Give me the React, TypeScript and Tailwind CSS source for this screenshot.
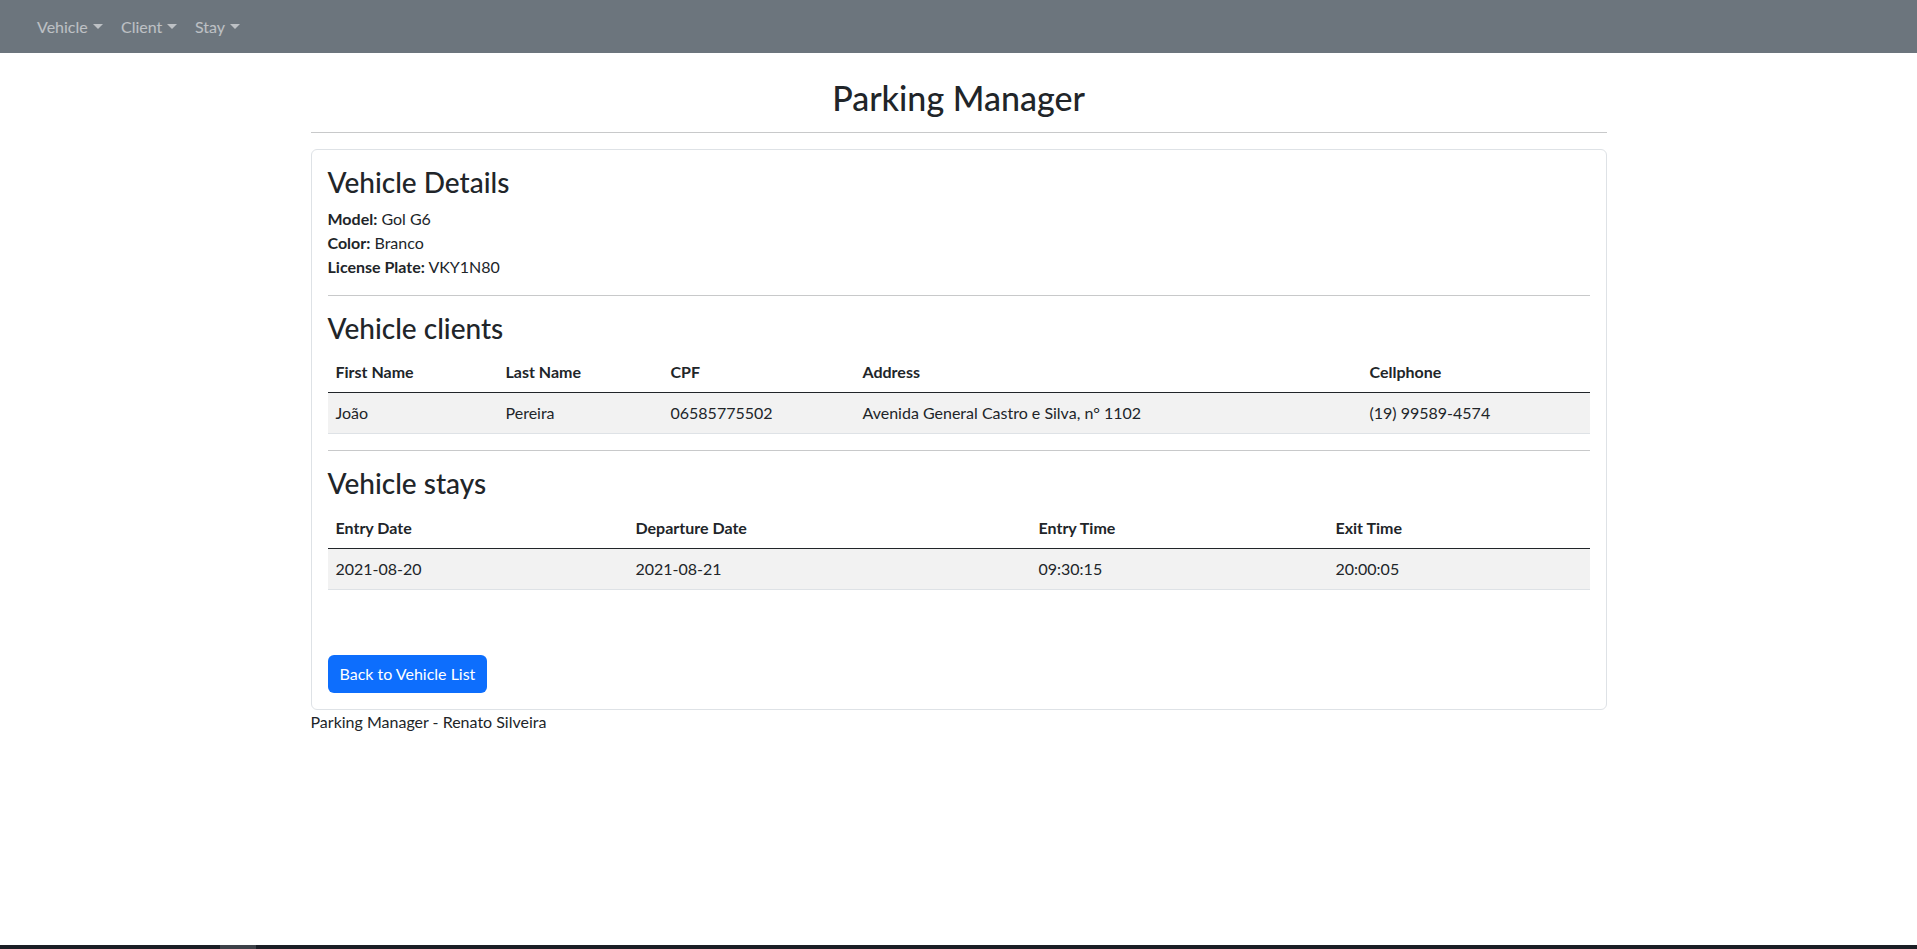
import React from "react";

const Caret = () => (
  <svg width="10" height="5" viewBox="0 0 10 5" className="ml-[5px] inline-block" aria-hidden>
    <polygon points="0,0 10,0 5,5" fill="currentColor" />
  </svg>
);

const Th = ({ children, w }: { children: React.ReactNode; w: string }) => (
  <th className={`${w} px-2 py-2 text-left font-bold leading-6`}>{children}</th>
);

const Td = ({ children }: { children: React.ReactNode }) => (
  <td className="px-2 py-2 leading-6">{children}</td>
);

export default function App() {
  return (
    <div
      className="flex h-[949px] flex-col bg-white text-[#212529] text-base"
      style={{ fontFamily: "Lato, 'Liberation Sans', sans-serif" }}
    >
      <nav className="flex h-[53px] shrink-0 items-center bg-[#6c757d] pl-[37px] text-white/55">
        <span className="flex w-[84px] items-center">
          Vehicle
          <Caret />
        </span>
        <span className="flex w-[74px] items-center">
          Client
          <Caret />
        </span>
        <span className="flex items-center">
          Stay
          <Caret />
        </span>
      </nav>

      <main className="flex-1">
        <div className="mx-auto w-[1296px]">
          <h2 className="mt-[25px] mb-[14px] text-center text-[34px] leading-[40px] font-medium">
            Parking Manager
          </h2>
          <hr className="border-0 border-t border-[#c8c9ca]" />

          <div className="mt-4 rounded-md border border-[#dee2e6] p-4">
            <h3 className="mb-[7px] text-[28px] leading-[33.6px] font-medium">Vehicle Details</h3>
            <div className="leading-6">
              <b>Model:</b> Gol G6
            </div>
            <div className="leading-6">
              <b>Color:</b> Branco
            </div>
            <div className="leading-6">
              <b>License Plate:</b> VKY1N80
            </div>

            <hr className="my-4 border-0 border-t border-[#c8c9ca]" />

            <h3 className="mb-[7px] text-[28px] leading-[33.6px] font-medium">Vehicle clients</h3>
            <table className="mb-4 w-full table-fixed border-collapse">
              <thead>
                <tr className="border-b border-[#212529]">
                  <Th w="w-[170px]">First Name</Th>
                  <Th w="w-[165px]">Last Name</Th>
                  <Th w="w-[192px]">CPF</Th>
                  <Th w="w-[507px]">Address</Th>
                  <Th w="w-auto">Cellphone</Th>
                </tr>
              </thead>
              <tbody>
                <tr className="border-b border-[#dee2e6] bg-[#f2f2f2]">
                  <Td>João</Td>
                  <Td>Pereira</Td>
                  <Td>06585775502</Td>
                  <Td>Avenida General Castro e Silva, n° 1102</Td>
                  <Td>(19) 99589-4574</Td>
                </tr>
              </tbody>
            </table>

            <hr className="my-4 border-0 border-t border-[#c8c9ca]" />

            <h3 className="mb-[7px] text-[28px] leading-[33.6px] font-medium">Vehicle stays</h3>
            <table className="w-full table-fixed border-collapse">
              <thead>
                <tr className="border-b border-[#212529]">
                  <Th w="w-[300px]">Entry Date</Th>
                  <Th w="w-[403px]">Departure Date</Th>
                  <Th w="w-[297px]">Entry Time</Th>
                  <Th w="w-auto">Exit Time</Th>
                </tr>
              </thead>
              <tbody>
                <tr className="border-b border-[#dee2e6] bg-[#f2f2f2]">
                  <Td>2021-08-20</Td>
                  <Td>2021-08-21</Td>
                  <Td>09:30:15</Td>
                  <Td>20:00:05</Td>
                </tr>
              </tbody>
            </table>

            <div className="pt-[65px]">
              <button className="h-[38px] rounded-md bg-[#0d6efd] px-3 text-base leading-6 text-white">
                Back to Vehicle List
              </button>
            </div>
          </div>

          <div className="leading-6">Parking Manager - Renato Silveira</div>
        </div>
      </main>

      <div className="flex h-[4px] shrink-0 bg-[#1b1e25]">
        <div className="ml-[220px] w-[36px] bg-[#3d4148]" />
      </div>
    </div>
  );
}
